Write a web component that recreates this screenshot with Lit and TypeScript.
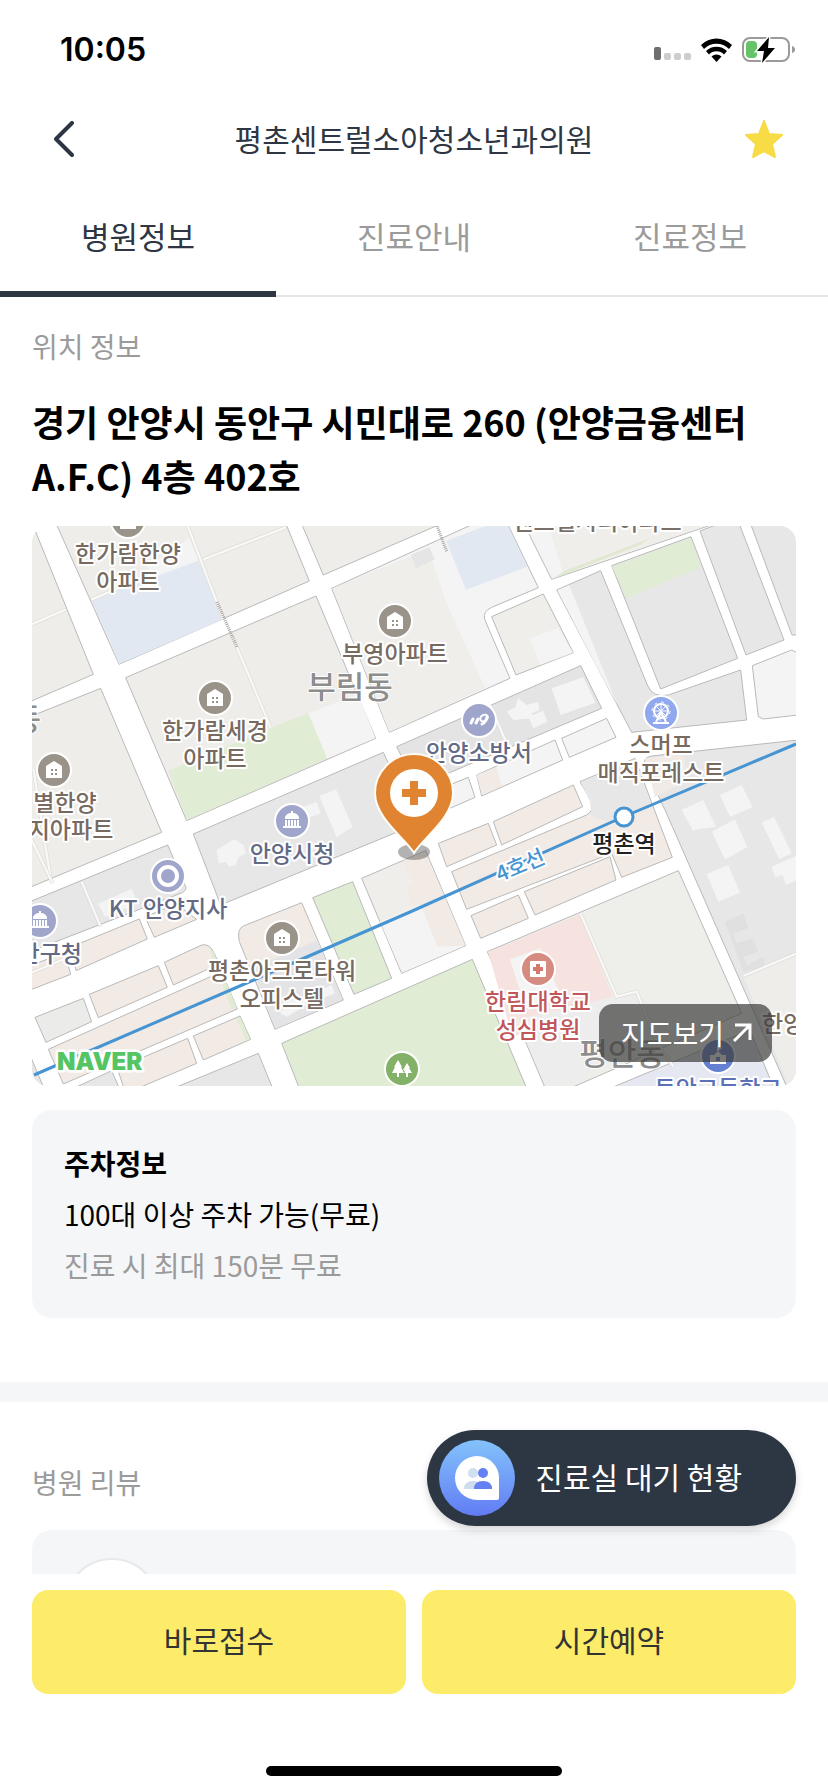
import { LitElement, html, svg, css } from "lit";
import { customElement, state } from "lit/decorators.js";

type Shape = [fill: string, d: string];
type Kind = "home" | "hall" | "fire" | "ring" | "tree" | "wheel" | "hospital" | "school";
interface Place {
  x: number;
  y: number;
  tone: string;
  lines: string[];
  kind?: Kind;
  iconX?: number;
  iconY?: number;
  anchor?: string;
}

const LAND = "#efedea";
const GREY = "#e7e7e8";
const PALE = "#f4f4f5";
const PINK = "#f2eae4";
const GREEN = "#e0ecd3";
const BLUE = "#e2e8f2";
const ROSE = "#f6e3df";

/* The district is stored as four tiles; each tile has its own origin, three units to a pixel. */
const tiles: { x: number; y: number; blocks: Shape[]; details: Shape[]; paths: string[] }[] = [
  {
    x: 30,
    y: 520,
    blocks: [
      [LAND, "M0 0L10 18L190 463L0 545Z"],
      [LAND, "M79 12H768L838 183L267 433Z"],
      [LAND, "M815 12H1232L880 165Z"],
      [LAND, "M287 473L858 228L1037 655L470 902Z"],
      [LAND, "M0 590L212 505L395 937L0 1102Z"],
      [GREY, "M490 942L1060 697L1160 912L572 1155Z"],
    ],
    details: [
      [PALE, "M350 140L478 55L505 122L385 172Z"],
      [BLUE, "M185 240L505 122L580 298L267 432Z"],
      [GREEN, "M415 752L720 625L835 580L892 715L471 900Z"],
      [PALE, "M835 580L985 522L1036 654L892 715Z"],
      [PALE, "M868 828L918 808L968 920L920 952Z"],
      [PALE, "M560 990L600 965L612 958L640 975L648 1000L625 1012L618 1035L596 1040L588 1026L566 1030Z"],
      [PALE, "M820 860L860 845L872 880L830 895Z"],
    ],
    paths: ["M472 15L580 298", "M605 345L722 622", "M520 118L768 22", "M0 315L108 268", "M185 238L350 170", "M10 745L60 1065"],
  },
  {
    x: 410,
    y: 520,
    blocks: [
      [PALE, "M-235 205L190 12H293L385 203L245 262Q218 274 224 298L300 475L-62 637Z"],
      [PALE, "M342 12H912L425 178Z"],
      ["#efeeea", "M245 290L400 222L490 398L318 465Z"],
      [GREY, "M440 210L572 152L712 495Q728 535 775 525L992 450L1010 600L665 637Z"],
      [GREY, "M605 137L843 50L983 415L752 507Z"],
      [GREY, "M870 33L925 12H988L1122 360L1008 405Z"],
      [GREY, "M1022 12H1165V345H1146Z"],
      [PALE, "M1027 437L1145 390L1165 400V585L1060 597L1045 590Z"],
      ["#e4e4e5", "M-40 680L512 437L575 565L20 800Z"],
      [PALE, "M455 655L590 595L618 652L478 712Z"],
      [PALE, "M200 765L435 660L458 720L215 828Z"],
      [PALE, "M70 815L175 772L195 832L90 878Z"],
      [PINK, "M250 905L490 795L518 860L275 975Z"],
      [PINK, "M85 970L235 910L260 975L110 1040Z"],
      [GREY, "M765 870L702 735Q700 712 725 708L1165 660V1700H1130Z"],
    ],
    details: [
      ["#efeeea", "M-233 205L55 88L110 250L225 503L-62 636Z"],
      [BLUE, "M108 62L238 14H292L352 140L168 210Z"],
      ["#e5e5e5", "M2 105L58 82L74 118L18 145Z"],
      ["#efeeea", "M415 14H900L460 162Z"],
      ["#e0e8d0", "M425 178L465 152L720 55L690 75Z"],
      [PALE, "M360 355L445 325L489 398L390 435Z"],
      [PALE, "M442 211L478 196L622 555L560 440Z"],
      [GREEN, "M606 140L842 54L872 142L650 235Z"],
      [PALE, "M425 505L520 472L556 548L452 585Z"],
      [PALE, "M290 575L315 562L325 535L350 555L385 545L388 570L365 580L368 595L310 600Z"],
      [PALE, "M355 590L400 572L412 605L370 625Z"],
      [PINK, "M200 765L258 742L276 798L216 826Z"],
      [PINK, "M705 715L820 703L832 780L735 832Z"],
      [PALE, "M930 825L995 795L1028 862L960 890Z"],
      [PALE, "M815 870L880 840L918 920L850 930Z"],
    ],
    paths: ["M240 555L290 670"],
  },
  {
    x: 30,
    y: 800,
    blocks: [
      [GREY, "M0 305L413 135L468 262Q468 275 450 281L0 455Z"],
      [PINK, "M0 497L105 458L122 523L0 570Z"],
      [PINK, "M125 440L328 357L352 417L138 512Z"],
      [PINK, "M345 350L440 312L500 358L373 412Z"],
      ["#ebebea", "M15 652L160 595L185 665L48 727Z"],
      [PINK, "M178 583L385 497L412 562L205 653Z"],
      [PINK, "M403 487L515 435Q538 430 550 455L568 492L430 555Z"],
      [PINK, "M55 748L575 515L622 627L100 852Z"],
      [PINK, "M262 805L473 715L500 790L300 875H285Z"],
      [PINK, "M490 708L630 648L662 718L520 780Z"],
      [GREY, "M130 865L245 812L268 865Z"],
      [GREY, "M430 865L685 760L728 865Z"],
      [GREY, "M0 765L42 865H0Z"],
      [PINK, "M640 378L815 308L940 600L735 688L628 425Q620 388 640 378Z"],
      [GREEN, "M848 293L968 245L1085 535L972 583Z"],
      ["#f0eeeb", "M995 235L1187 152L1307 437L1115 520Z"],
      [GREEN, "M755 730L1327 478L1490 865H808Z"],
    ],
    details: [
      ["#e4e4e6", "M668 505L862 420L938 598L737 686Z"],
      [PALE, "M205 312L305 266L322 310L225 350Z"],
      [PALE, "M750 640L775 605L860 575L905 555L915 580L840 610L770 650Z"],
      [GREEN, "M538 448L550 455L620 622L605 628Z"],
      [GREEN, "M620 655L630 650L660 716L648 722Z"],
      [PINK, "M1118 182L1186 154L1306 436L1222 438L1172 310L1140 318L1132 260L1148 248Z"],
      [PALE, "M1050 365L1172 315L1222 440L1304 437L1116 518Z"],
    ],
    paths: ["M155 245L212 380", "M0 110L68 250", "M0 520L120 470"],
  },
  {
    x: 410,
    y: 800,
    blocks: [
      [PINK, "M125 215L530 45Q555 30 545 5L510 -55L675 -125L787 172L635 232L605 160L170 328Z"],
      [PINK, "M343 275L600 170L618 240L375 345Z"],
      [PINK, "M183 347L325 285L355 355L212 415Z"],
      ["#eeeeeb", "M232 455L805 212L995 640L480 865H406Z"],
      ["#e5e8f0", "M600 865L1020 690L1092 865Z"],
    ],
    details: [
      [GREY, "M540 5L512 -54L674 -122L722 10L600 68L545 48Z"],
      [ROSE, "M234 456L512 342L608 590L308 712Z"],
      [PALE, "M300 478L390 445L450 580L345 620Z"],
      ["#ededed", "M320 660L610 590L680 575L740 720L480 850L408 862Z"],
      ["#efedea", "M1000 528L1165 460V865H1140Z"],
      [PALE, "M905 95L975 58L1012 142L945 178Z"],
      [PALE, "M815 30L870 5L912 68L850 92Z"],
      [PALE, "M1055 68L1092 50L1145 160L1108 178Z"],
      [PALE, "M890 222L955 195L990 278L925 305Z"],
      [PALE, "M1085 200L1165 165V240L1128 255L1118 225L1095 232Z"],
      ["#e0e0e1", "M945 365L1000 340L1015 385L968 400L980 430L1030 415L1045 455L1000 470L1012 495L1060 470L1065 500L1000 515Z"],
    ],
    paths: ["M512 342L620 590L680 575L740 725L790 800", "M1000 528L1165 458"],
  },
];

const BROWN = "#776a61";
const SLATE = "#636a86";
const places: Place[] = [
  { x: 597, y: 530, tone: "#7a7069", lines: ["센트럴시티아파트"] },
  { x: 128, y: 562, tone: BROWN, lines: ["한가람한양", "아파트"], kind: "home", iconX: 128, iconY: 521 },
  { x: 215, y: 739, tone: BROWN, lines: ["한가람세경", "아파트"], kind: "home", iconX: 215, iconY: 698 },
  { x: 395, y: 662, tone: BROWN, lines: ["부영아파트"], kind: "home", iconX: 395, iconY: 621 },
  { x: 65, y: 811, tone: BROWN, lines: ["별한양"], kind: "home", iconX: 54, iconY: 770 },
  { x: 71, y: 838, tone: BROWN, lines: ["지아파트"] },
  { x: 479, y: 761, tone: SLATE, lines: ["안양소방서"], kind: "fire", iconX: 479, iconY: 720 },
  { x: 292, y: 862, tone: SLATE, lines: ["안양시청"], kind: "hall", iconX: 292, iconY: 821 },
  { x: 168, y: 917, tone: SLATE, lines: ["KT 안양지사"], kind: "ring", iconX: 168, iconY: 876 },
  { x: 82, y: 962, tone: SLATE, lines: ["동안구청"], kind: "hall", iconX: 40, iconY: 921, anchor: "end" },
  { x: 282, y: 979, tone: BROWN, lines: ["평촌아크로타워", "오피스텔"], kind: "home", iconX: 282, iconY: 938 },
  { x: 661, y: 753, tone: BROWN, lines: ["스머프", "매직포레스트"], kind: "wheel", iconX: 661, iconY: 713 },
  { x: 538, y: 1010, tone: "#c0575b", lines: ["한림대학교", "성심병원"], kind: "hospital", iconX: 538, iconY: 969 },
  { x: 762, y: 1032, tone: BROWN, lines: ["한양"], anchor: "start" },
  { x: 718, y: 1097, tone: "#5c70b8", lines: ["동안고등학교"], kind: "school", iconX: 718, iconY: 1056 },
  { x: 402, y: 1110, tone: "#5d8f45", lines: [], kind: "tree", iconX: 402, iconY: 1069 },
];

const badgeTone: Record<Kind, string> = {
  home: "#9a938a",
  hall: "#a0a6cb",
  fire: "#a0a6cb",
  ring: "#a0a6cb",
  tree: "#83b168",
  wheel: "#8fa8ee",
  hospital: "#d58b80",
  school: "#6480d0",
};

const glyphs: Record<Kind, unknown> = {
  home: svg`<path fill="#fff" d="M-8 8V-4L0 -9L8 -4V8Z"/>
    <path fill="#9a938a" d="M-3 -1h2v2h-2zM1 -1h2v2h-2zM-3 3h2v2h-2zM1 3h2v2h-2z"/>`,
  hall: svg`<path fill="#fff" d="M-7 -4Q-5 -8 -1 -8V-10H1V-8Q5 -8 7 -4V-2H-7ZM-7 -1h2v6h-2zM-4 -1h2v6h-2zM-1 -1h2v6h-2zM2 -1h2v6h-2zM5 -1h2v6h-2zM-9 5H9V7H-9Z"/>`,
  fire: svg`<path fill="none" stroke="#fff" stroke-width="3" stroke-linecap="round" d="M-8 3L-6 -1M-3 3L-1 -1"/>
    <ellipse cx="5" cy="-2" rx="4" ry="3" fill="none" stroke="#fff" stroke-width="2" transform="rotate(-30 5 -2)"/>
    <path fill="none" stroke="#fff" stroke-width="3" stroke-linecap="round" d="M8 -3Q7 2 3 4"/>`,
  ring: svg`<circle r="9" fill="none" stroke="#fff" stroke-width="4"/>`,
  tree: svg`<path fill="#fff" d="M-4 -9L0 -2H-1L2 4H-3V8H-5V4H-10L-7 -2H-8ZM5 -6L8 -1H7L10 4H6V8H4V4H2L3 3L1 0L3 -1H2Z"/>`,
  wheel: svg`<circle r="7" cy="-2" fill="none" stroke="#fff" stroke-width="2"/>
    <circle r="9" cy="-2" fill="none" stroke="#fff" stroke-width="1" stroke-dasharray="3 4"/>
    <path fill="none" stroke="#fff" stroke-width="1" d="M-7 -2H7M0 -9V5M-5 -7L5 3M5 -7L-5 3"/>
    <path fill="none" stroke="#fff" stroke-width="2" d="M0 -1L-5 9M0 -1L5 9M-8 10H8"/>`,
  hospital: svg`<rect x="-8" y="-8" width="16" height="16" rx="1" fill="#fff"/>
    <path fill="#d5786d" d="M-2 -5H2V-2H5V2H2V5H-2V2H-5V-2H-2Z"/>`,
  school: svg`<path fill="#fff" d="M-8 8V-1H-4L0 -5L4 -1H8V8ZM-1 -5V-10L4 -8L1 -6V-5Z"/>
    <path fill="#6480d0" d="M-2 1H2V5H-2Z"/>`,
};

@customElement("clinic-map")
class ClinicMap extends LitElement {
  static styles = css`
    :host {
      display: block;
      position: relative;
      overflow: hidden;
      border-radius: 16px;
      aspect-ratio: 764 / 560;
      background: #fff;
    }
    .chart {
      display: block;
      width: 100%;
      height: 100%;
      font-family: "Noto Sans CJK KR", sans-serif;
    }
    .block {
      stroke: #b9b9b9;
      stroke-width: 3;
      stroke-linejoin: round;
    }
    .walk {
      fill: none;
      stroke: #dcdad6;
      stroke-width: 11;
    }
    .walk-top {
      fill: none;
      stroke: #f9f9f7;
      stroke-width: 7;
    }
    .label,
    .district,
    .station,
    .line {
      paint-order: stroke;
      stroke: #fff;
      stroke-width: 4px;
      stroke-linejoin: round;
      font-size: 23px;
      font-weight: 500;
    }
    .district {
      font-size: 31px;
      fill: #8d8d8d;
      stroke-width: 2px;
    }
    .station {
      fill: #222;
    }
    .line {
      font-size: 21px;
      fill: #4694d2;
    }
    .brand {
      font: 900 24px Inter, sans-serif;
      fill: #55c463;
      stroke: #fff;
      stroke-width: 5px;
      paint-order: stroke;
      stroke-linejoin: round;
    }
    .open {
      position: absolute;
      right: 24px;
      bottom: 24px;
      display: flex;
      align-items: center;
      gap: 8px;
      height: 58px;
      padding: 0 20px 0 22px;
      border: 0;
      border-radius: 14px;
      background: rgb(60 60 58 / 70%);
      color: #fff;
      font: 400 28px "Noto Sans CJK KR", sans-serif;
      cursor: pointer;
    }
  `;

  render() {
    return html`
      <svg class="chart" viewBox="32 526 764 560" preserveAspectRatio="xMidYMid slice" role="img" aria-label="병원 위치 지도">
        ${tiles.map(
          (t) => svg`<g transform="translate(${t.x} ${t.y}) scale(.33333)">
            ${t.blocks.map(([fill, d]) => svg`<path class="block" fill=${fill} d=${d} />`)}
          </g>`,
        )}
        ${tiles.map(
          (t) => svg`<g transform="translate(${t.x} ${t.y}) scale(.33333)">
            ${t.details.map(([fill, d]) => svg`<path fill=${fill} d=${d} />`)}
            ${t.paths.map((d) => svg`<path class="walk" d=${d} /><path class="walk-top" d=${d} />`)}
          </g>`,
        )}
        <path d="M217 602L237 647M437 526L447 552" stroke="#a9a7a3" stroke-width="3" stroke-dasharray="1 1" />
        <path d="M34 1075L293 963L410 912L623 817L796 744" fill="none" stroke="#4694d2" stroke-width="3" />
        <text class="district" x="41" y="730" text-anchor="end">동</text>
        <text class="district" x="350" y="698" text-anchor="middle">부림동</text>
        <text class="district" x="622" y="1065" text-anchor="middle">평안동</text>
        ${places.map((p) => this.place(p))}
        <text class="line" x="520" y="873" text-anchor="middle" transform="rotate(-23 520 865)">4호선</text>
        <circle cx="624" cy="817" r="9" fill="#fff" stroke="#4694d2" stroke-width="3" />
        <text class="station" x="624" y="852" text-anchor="middle">평촌역</text>
        <ellipse cx="414" cy="852" rx="16" ry="8" fill="#000" opacity=".3" />
        <path
          d="M414 853C405 838 375 818 375 793A39 39 0 0 1 453 793C453 818 423 838 414 853Z"
          fill="#e08432"
          stroke="#fffdf5"
          stroke-width="2"
        />
        <circle cx="414" cy="793" r="24" fill="#fff" />
        <path
          d="M414 785V801M406 793H422"
          stroke="#e08432"
          stroke-width="8"
          stroke-linecap="square"
          stroke-linejoin="round"
        />
        <text class="brand" x="57" y="1070">NAVER</text>
      </svg>
      <button class="open" type="button">
        지도보기
        <svg width="20" height="20" viewBox="0 0 20 20" fill="none" stroke="#fff" stroke-width="3" aria-hidden="true">
          <path d="M2 18L18 2M3 2H18V17" />
        </svg>
      </button>
    `;
  }

  private place(p: Place) {
    return svg`
      ${p.kind
        ? svg`<g transform="translate(${p.iconX} ${p.iconY})">
            <circle r="17" fill=${badgeTone[p.kind]} stroke="#fff" stroke-width="2" />${glyphs[p.kind]}
          </g>`
        : ""}
      ${p.lines.map(
        (line, i) =>
          svg`<text class="label" fill=${p.tone} x=${p.x} y=${p.y + i * 28} text-anchor=${p.anchor ?? "middle"}>${line}</text>`,
      )}
    `;
  }
}

@customElement("app-root")
class AppRoot extends LitElement {
  static styles = css`
    :host {
      display: flex;
      flex-direction: column;
      height: 100vh;
      background: #fff;
      color: #000;
      font-family: "Noto Sans CJK KR", sans-serif;
      font-size: 28px;
      line-height: 40px;
    }
    * {
      box-sizing: border-box;
    }
    button {
      border: 0;
      padding: 0;
      background: none;
      font: inherit;
      color: inherit;
      cursor: pointer;
    }
    svg {
      display: block;
    }
    h1,
    h2,
    h3,
    p {
      margin: 0;
      font-weight: 400;
      font-size: inherit;
    }
    .status {
      display: flex;
      align-items: center;
      justify-content: space-between;
      height: 100px;
      padding: 0 33px 0 60px;
      flex: none;
    }
    .clock {
      font: 600 32px/40px Inter, sans-serif;
    }
    .signals {
      display: flex;
      align-items: center;
      gap: 10px;
    }
    .bar {
      display: grid;
      grid-template-columns: 48px 1fr 48px;
      align-items: center;
      height: 80px;
      padding: 0 40px 2px;
      flex: none;
    }
    .icon {
      display: grid;
      place-items: center;
      width: 48px;
      height: 48px;
    }
    .title {
      padding-bottom: 2px;
      text-align: center;
      font-size: 30px;
      color: #2d3642;
    }
    .tabs {
      display: grid;
      grid-template-columns: repeat(3, 1fr);
      height: 117px;
      box-shadow: inset 0 -2px #e6e6e6;
      flex: none;
    }
    .tab {
      border-bottom: 6px solid transparent;
      font-size: 31px;
      color: #9b9b9b;
    }
    .tab[aria-selected="true"] {
      border-color: #2d3642;
      color: #2d3642;
    }
    .content {
      flex: 1;
      min-height: 0;
      overflow: hidden auto;
      scrollbar-width: none;
    }
    .place {
      padding: 29px 32px 64px;
      border-bottom: 20px solid #f5f6f8;
    }
    .caption {
      color: #9b9b9b;
      margin-bottom: 28px;
    }
    .address {
      font-size: 36px;
      line-height: 54px;
      font-weight: 700;
      margin-bottom: 24px;
    }
    .parking {
      display: grid;
      gap: 3px;
      margin-top: 24px;
      padding: 29px 32px;
      border-radius: 20px;
      background: #f5f6f8;
      line-height: 48px;
    }
    .parking h3 {
      font-weight: 700;
    }
    .note {
      color: #9b9b9b;
    }
    .reviews {
      padding: 60px 32px 32px;
    }
    .review {
      padding: 28px 32px;
      border-radius: 20px;
      background: #f5f6f8;
    }
    .avatar {
      width: 96px;
      height: 96px;
      border: 2px solid #e6e8eb;
      border-radius: 50%;
      background: #fff;
    }
    .dock {
      position: relative;
      display: grid;
      grid-template-columns: 1fr 1fr;
      gap: 16px;
      padding: 16px 32px;
      flex: none;
    }
    .action {
      height: 104px;
      padding-bottom: 6px;
      border-radius: 16px;
      background: #fcec69;
      color: #333;
      font-size: 30px;
    }
    .waiting {
      position: absolute;
      right: 32px;
      bottom: calc(100% + 48px);
      display: flex;
      align-items: center;
      gap: 20px;
      height: 96px;
      padding: 0 54px 0 12px;
      border-radius: 48px;
      background: #2d3743;
      color: #fff;
      font-size: 30px;
      box-shadow: 0 4px 8px rgb(0 0 0 / 16%);
    }
    .waiting span {
      padding-bottom: 4px;
    }
    .home {
      display: flex;
      justify-content: center;
      padding: 56px 0 16px;
      flex: none;
    }
    .handle {
      width: 296px;
      height: 10px;
      border-radius: 5px;
      background: #000;
    }
  `;

  @state() private tab = 0;

  private tabs = ["병원정보", "진료안내", "진료정보"];

  render() {
    return html`
      <div class="status">
        <span class="clock">10:05</span>
        <div class="signals">
          <svg width="37" height="24" viewBox="0 0 37 24" aria-hidden="true">
            <rect y="9" width="7" height="13" rx="2" fill="#6e6e6e" />
            <g fill="#cdcdcd">
              <rect x="10" y="15" width="7" height="7" rx="2" />
              <rect x="20" y="15" width="7" height="7" rx="2" />
              <rect x="30" y="15" width="7" height="7" rx="2" />
            </g>
          </svg>
          <svg width="31" height="24" viewBox="0 0 31 24" aria-hidden="true">
            <path d="M0 7A22 22 0 0 1 31 7L28 11A17.500 17.500 0 0 0 3 11Z" />
            <path d="M5 13A15 15 0 0 1 26 13L23 16.500A10.500 10.500 0 0 0 8 16.500Z" />
            <path d="M10.500 18.500A7.500 7.500 0 0 1 20.500 18.500L15.500 24Z" />
          </svg>
          <svg width="53" height="26" viewBox="0 0 53 26" aria-hidden="true">
            <rect x="1" y="1" width="46" height="23" rx="7" fill="none" stroke="#9a9a9a" stroke-width="2" />
            <path d="M50 9Q53 10 53 12.500Q53 15 50 16Z" fill="#9a9a9a" />
            <rect x="4" y="4" width="11" height="17" rx="4" fill="#64c466" />
            <path d="M27 0L15 14H22L20 26L33 11H26Z" stroke="#fff" stroke-width="3" paint-order="stroke" />
          </svg>
        </div>
      </div>
      <header class="bar">
        <button class="icon" type="button" aria-label="뒤로">
          <svg width="20" height="36" viewBox="0 0 20 36" fill="none" stroke="#2d3642" stroke-width="4" stroke-linecap="round" stroke-linejoin="round">
            <path d="M18 2L2 18L18 34" />
          </svg>
        </button>
        <h1 class="title">평촌센트럴소아청소년과의원</h1>
        <button class="icon" type="button" aria-label="즐겨찾기" aria-pressed="true">
          <svg width="38" height="38" viewBox="0 0 38 38" fill="#f8dc45" stroke="#f8dc45" stroke-width="2" stroke-linejoin="round">
            <path d="M19 1L24 14L37 15L27 24L30 37L19 31L8 37L11 24L1 15L14 14Z" />
          </svg>
        </button>
      </header>
      <nav class="tabs" role="tablist">
        ${this.tabs.map(
          (name, i) => html`<button
            class="tab"
            type="button"
            role="tab"
            aria-selected=${i === this.tab ? "true" : "false"}
            @click=${() => (this.tab = i)}
          >
            ${name}
          </button>`,
        )}
      </nav>
      <main class="content">
        <section class="place">
          <p class="caption">위치 정보</p>
          <h2 class="address">경기 안양시 동안구 시민대로 260 (안양금융센터 A.F.C) 4층 402호</h2>
          <clinic-map></clinic-map>
          <div class="parking">
            <h3>주차정보</h3>
            <p>100대 이상 주차 가능(무료)</p>
            <p class="note">진료 시 최대 150분 무료</p>
          </div>
        </section>
        <section class="reviews">
          <h2 class="caption">병원 리뷰</h2>
          <div class="review"><div class="avatar"></div></div>
        </section>
      </main>
      <footer class="dock">
        <button class="waiting" type="button">
          <svg width="76" height="76" viewBox="0 0 76 76" aria-hidden="true">
            <defs>
              <linearGradient id="sky" x1="0" y1="0" x2="0" y2="1">
                <stop offset="0" stop-color="#83c2fb" />
                <stop offset="1" stop-color="#627cf4" />
              </linearGradient>
            </defs>
            <circle cx="38" cy="38" r="38" fill="url(#sky)" />
            <path d="M38 16A22 22 0 0 1 60 38V58Q60 60 58 60H38A22 22 0 0 1 38 16Z" fill="#fff" />
            <circle cx="34" cy="33" r="5" fill="#cfe0f0" />
            <path d="M25 49Q25 41 34 41Q43 41 43 49Z" fill="#cfdcf0" />
            <circle cx="44" cy="33" r="5" fill="#6480f2" />
            <path d="M35 49Q35 41 44 41Q53 41 53 49Z" fill="#6480f2" />
          </svg>
          <span>진료실 대기 현황</span>
        </button>
        <button class="action" type="button">바로접수</button>
        <button class="action" type="button">시간예약</button>
      </footer>
      <div class="home"><div class="handle"></div></div>
    `;
  }
}
